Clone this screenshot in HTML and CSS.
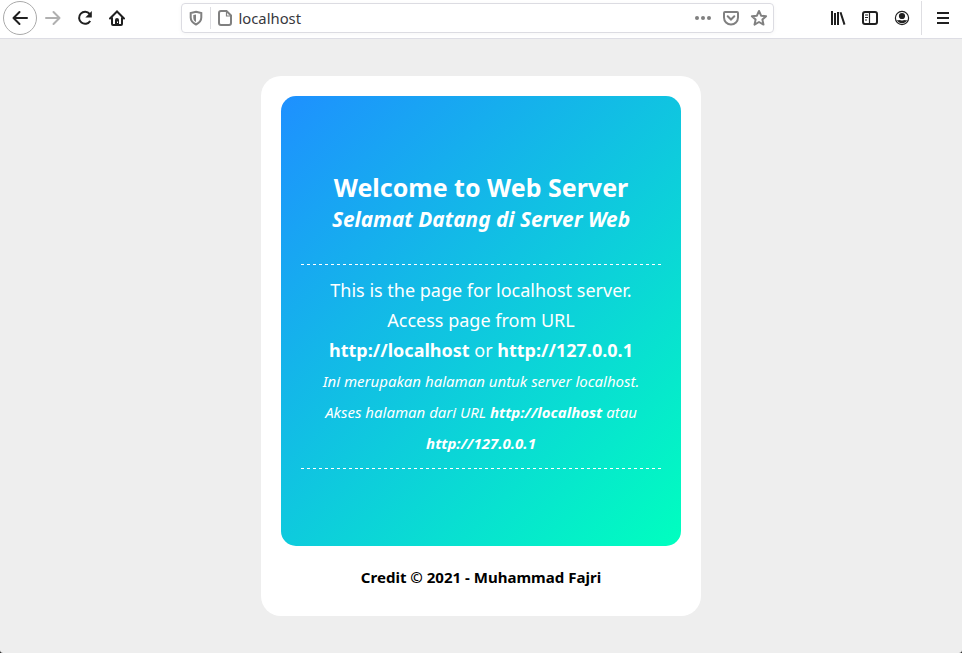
FILE: index.html
```html
<!DOCTYPE html>
<html lang="en">
<head>
<meta charset="utf-8">
<title>localhost</title>
<link rel="stylesheet" href="styles.css">
</head>
<body>
<header class="toolbar">
  <nav class="nav">
    <span class="back"><svg width="18" height="18" viewBox="0 0 18 18"><path d="M16 9H2.500M8.500 3 2.500 9l6 6" stroke-linecap="round" stroke-linejoin="round"/></svg></span>
    <svg class="forward" width="18" height="18" viewBox="0 0 18 18"><path d="M2 9h13.500M9.500 3l6 6-6 6" stroke-linecap="round" stroke-linejoin="round"/></svg>
    <svg width="18" height="18" viewBox="0 0 18 18"><path d="M14.200 12A6 6 0 1 1 13.700 5"/><path class="fill" d="M15.800 2v6.500H9.300z"/></svg>
    <svg width="18" height="18" viewBox="0 0 18 18"><path d="M2 9.500 9 2.500l7 7M4 8.500V15q0 1 1 1h8q1 0 1-1V8.500" stroke-linecap="round"/><path class="fill" d="M7 16v-5q0-2 2-2t2 2v5z"/><path class="slot" d="M9.500 12.500v1.500"/></svg>
  </nav>
  <div class="address">
    <svg class="shield" width="16" height="16" viewBox="0 0 16 16"><path d="M8 1.800 13.300 3v4.500c0 3.500-2.300 5.500-5.300 7-3-1.500-5.300-3.500-5.300-7V3z"/><path class="fill" d="M8 4.500v7.500C6 11 5.300 9.500 5.300 7.500V5z"/></svg>
    <i class="rule"></i>
    <svg class="page" width="16" height="18" viewBox="0 0 16 18"><path d="M4 2h5.500L14 6.500V14q0 2-2 2H4q-2 0-2-2V4q0-2 2-2z"/><path class="thin" d="M9.500 2v5H14"/></svg>
    <span class="url">localhost</span>
    <svg class="dots" width="18" height="18" viewBox="0 0 18 18"><circle cx="3" cy="9" r="2"/><circle cx="9" cy="9" r="2"/><circle cx="15" cy="9" r="2"/></svg>
    <svg width="18" height="18" viewBox="0 0 18 18"><path d="M3 3h12q1 0 1 1v4.500a7 7 0 0 1-14 0V4q0-1 1-1z"/><path d="m5.700 7.200 3.300 3.300 3.300-3.300" stroke-linecap="round"/></svg>
    <svg width="18" height="18" viewBox="0 0 18 18"><path d="m9 2 2.100 4.700 5 .5-3.700 3.400 1.100 5L9 13l-4.500 2.600 1.100-5L1.900 7.200l5-.5z" stroke-linejoin="round"/></svg>
  </div>
  <div class="tools">
    <svg width="18" height="18" viewBox="0 0 18 18"><path d="M3 2v14M6 4v12M9 3v13M11.500 3.300l4 12.300"/></svg>
    <svg width="18" height="18" viewBox="0 0 18 18"><rect x="2" y="3" width="14" height="12" rx="2"/><path class="thin" d="M8.500 3v12M4 6h3M4 8.500h3M4 11h2"/></svg>
    <svg width="18" height="18" viewBox="0 0 18 18"><circle class="thin" cx="9" cy="9" r="6.600"/><circle class="fill" cx="9" cy="7" r="3.100"/><path class="fill" d="M4 11q2 .3 3 0 2 1.200 4 0 1 .3 3 0-1.500 3.300-5 3.300T4 11z"/></svg>
    <i class="rule"></i>
    <svg width="18" height="18" viewBox="0 0 18 18"><path d="M3 4h12M3 9h12M3 14h12"/></svg>
  </div>
</header>
<main class="card">
  <section class="panel">
    <h1>Welcome to Web Server</h1>
    <h2>Selamat Datang di Server Web</h2>
    <div class="message">
      <p>This is the page for localhost server. Access page from URL <b>http://localhost</b> or <b>http://127.0.0.1</b></p>
      <p class="translation">Ini merupakan halaman untuk server localhost. Akses halaman dari URL <b>http://localhost</b> atau <b>http://127.0.0.1</b></p>
    </div>
  </section>
  <footer>Credit © 2021 - Muhammad Fajri</footer>
</main>
</body>
</html>
```
FILE: styles.css
```css
* { box-sizing: border-box; }
html { background: #222; }
body {
  margin: 0;
  height: 653px;
  overflow: hidden;
  background: #eee;
  border-radius: 0 0 3px 3px;
  font-family: "Noto Sans", sans-serif;
}
.toolbar {
  height: 39px;
  display: flex;
  background: #fff;
  border-bottom: 1px solid #dddde4;
}
svg {
  flex: none;
  fill: none;
  stroke: #202020;
  stroke-width: 2;
}
svg .fill { fill: #202020; stroke: none; }
svg .thin { stroke-width: 1.2; }
svg .slot { stroke: #fff; stroke-width: 1; }
.nav {
  width: 181px;
  height: 36px;
  padding-left: 3px;
  display: flex;
  align-items: center;
  gap: 14px;
}
.back {
  width: 34px;
  height: 34px;
  margin-right: -7px;
  border: 1px solid #aaa;
  border-radius: 50%;
  display: grid;
  place-items: center;
}
.nav .forward { stroke: #b0b0b0; }
.address {
  width: 593px;
  height: 30px;
  margin-top: 3px;
  padding: 0 5px 0 6px;
  display: flex;
  align-items: center;
  border: 1px solid #dcdce2;
  border-radius: 4px;
  box-shadow: 0 1px 4px rgba(0, 0, 0, .04);
}
.address svg { stroke: #808080; margin-left: 10px; }
.address .shield, .address .page { margin-left: 0; }
.address .fill, .address .dots { fill: #808080; stroke: none; }
.rule { width: 1px; background: #dedee2; }
.address .rule { height: 22px; margin: 0 6px; }
.url { flex: 1; margin-left: 5.5px; font-size: 14.8px; line-height: 20px; color: #38383d; }
.tools {
  height: 36px;
  margin-left: 55px;
  display: flex;
  align-items: center;
  gap: 14px;
}
.tools .rule { height: 34px; margin: 0 -2px 0 -4px; }
.card {
  width: 440px;
  height: 540px;
  margin: 37px auto 0;
  padding: 20px;
  background: #fff;
  border-radius: 20px;
  text-align: center;
}
.panel {
  height: 450px;
  padding: 73px 20px 0;
  border-radius: 15px;
  background: linear-gradient(135deg, #1e90ff, #00ffbf);
  color: #fff;
}
h1, h2, p { margin: 0; }
h1 { font-size: 25px; line-height: 36px; }
h2 { font-size: 20.83px; line-height: 28px; font-style: italic; }
.message {
  --dashes: repeating-linear-gradient(90deg, #fff 0 3px, transparent 3px 5.95px);
  height: 205px;
  margin-top: 31px;
  padding: 11px 20px 0;
  background: var(--dashes) top / 100% 1px no-repeat, var(--dashes) bottom / 100% 1px no-repeat;
  font-size: 18px;
  line-height: 30px;
}
.translation { margin-top: 1px; font-size: 15px; line-height: 31px; font-style: italic; }
footer { padding-top: 19px; font-size: 15.04px; line-height: 24px; font-weight: 700; color: #000; }
```
